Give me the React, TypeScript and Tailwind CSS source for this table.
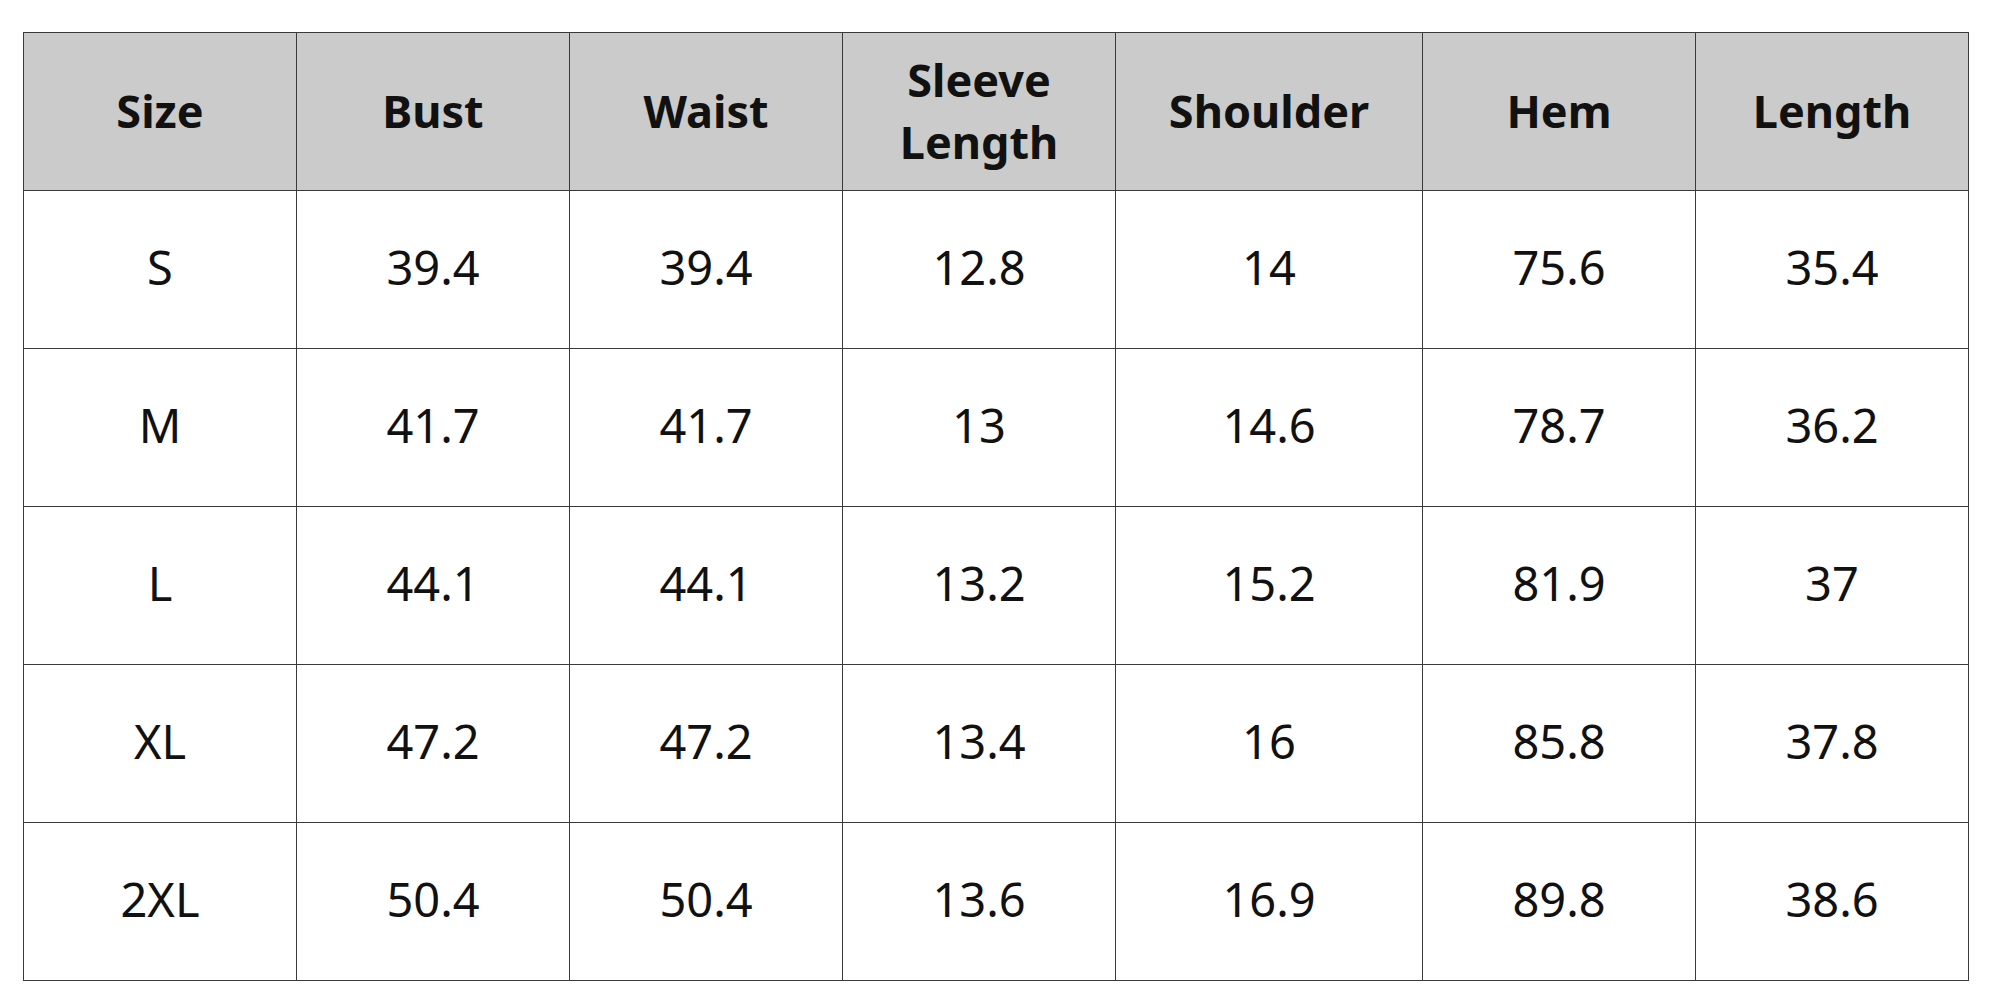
import React from "react";

const headers = ["Size", "Bust", "Waist", "Sleeve Length", "Shoulder", "Hem", "Length"];
const rows = [
  ["S", "39.4", "39.4", "12.8", "14", "75.6", "35.4"],
  ["M", "41.7", "41.7", "13", "14.6", "78.7", "36.2"],
  ["L", "44.1", "44.1", "13.2", "15.2", "81.9", "37"],
  ["XL", "47.2", "47.2", "13.4", "16", "85.8", "37.8"],
  ["2XL", "50.4", "50.4", "13.6", "16.9", "89.8", "38.6"],
];

export default function App() {
  return (
    <div className="w-[2000px] h-[1000px] bg-white pt-[32px] pl-[23px]" style={{ fontFamily: '"Noto Sans", sans-serif' }}>
      <div className="grid w-fit grid-cols-[272px_272px_272px_272px_306px_272px_272px] auto-rows-[157px] gap-px p-px bg-[#3a3a3a] text-[#111]">
        {headers.map((h) => (
          <div key={h} className="bg-[#cbcbcb] flex items-center justify-center text-center font-bold text-[45px] leading-[62px] px-6 pb-[2px]">
            {h === "Sleeve Length" ? (
              <span>
                Sleeve
                <br />
                Length
              </span>
            ) : (
              h
            )}
          </div>
        ))}
        {rows.map((r, i) =>
          r.map((c, j) => (
            <div key={`${i}-${j}`} className="bg-white flex items-center justify-center text-[47px] leading-none pb-[5px]">
              {c}
            </div>
          ))
        )}
      </div>
    </div>
  );
}
